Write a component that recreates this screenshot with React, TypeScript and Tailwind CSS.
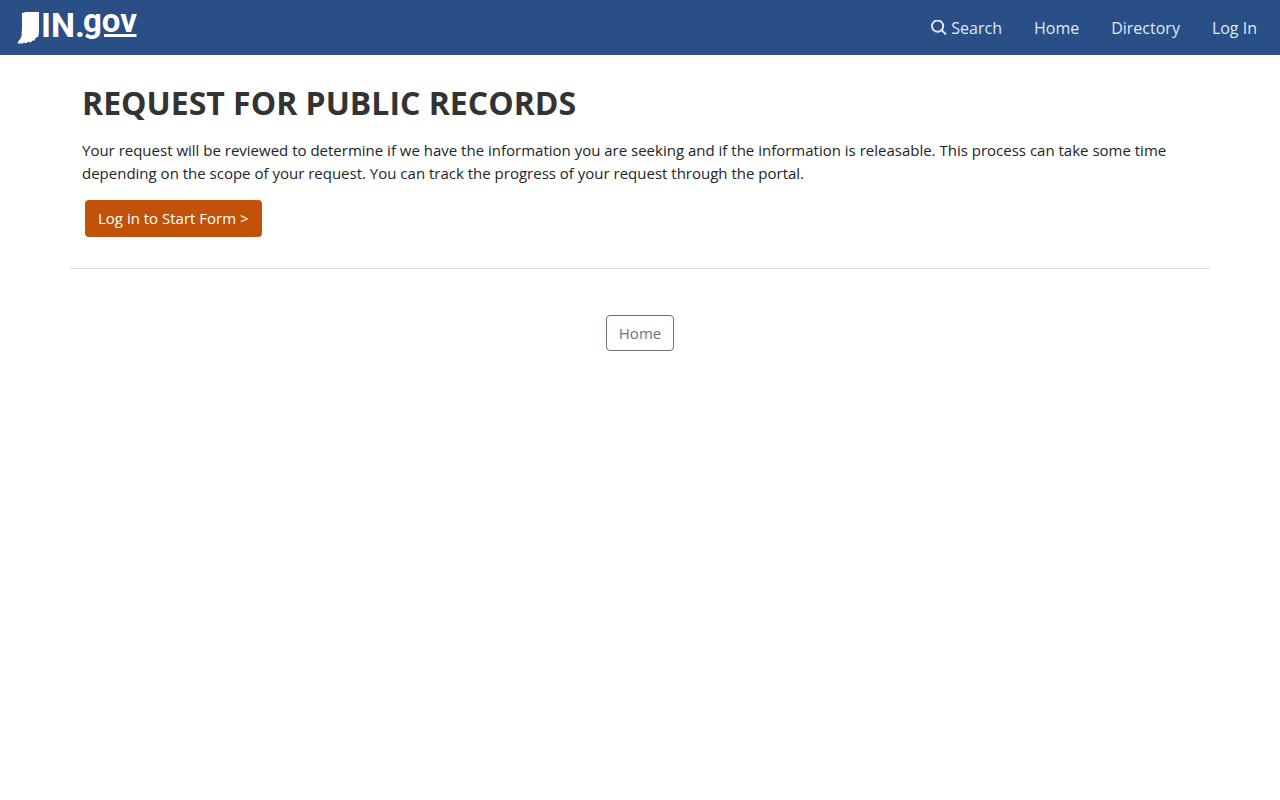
interface NavItem {
  href: string;
  label: string;
}

const navItems: NavItem[] = [
  { href: "#home", label: "Home" },
  { href: "#directory", label: "Directory" },
  { href: "#login", label: "Log In" },
];

function SearchIcon() {
  return (
    <svg className="size-4" viewBox="0 0 16 16" fill="none" stroke="currentColor" strokeWidth="1.9" aria-hidden="true">
      <circle cx="6.6" cy="6.1" r="5.6" />
      <path d="M10.6 10.1l4.4 4.4" />
    </svg>
  );
}

function Logo() {
  return (
    <a href="#home" aria-label="IN.gov" className="block text-white">
      <svg className="h-[55px] w-[140px]" viewBox="0 0 140 55" fill="currentColor" aria-hidden="true">
        <path d="M22 12.6L23.5 13L25.5 12H39V33.5L38.3 35L38.6 36.3L36.8 37.3L35.2 38.8L34.3 40.8L32.4 40.6L30.8 42.5L28.5 41.8L26 43.3L24 42.4L22 43.8L20 43.3L17.8 44L18.4 41.2L20.6 38.5L21.8 35.2L21.6 32L22 30Z" />
        <text x="41" y="37" fontFamily="Roboto, sans-serif" fontWeight="700" fontSize="34">
          I
        </text>
        <text x="51" y="37" fontFamily="Roboto, sans-serif" fontWeight="700" fontSize="34">
          N.
        </text>
        <text x="83" y="32" fontFamily="Roboto, sans-serif" fontWeight="700" fontSize="33">
          gov
        </text>
        <rect x="104" y="34" width="32.5" height="3" />
      </svg>
    </a>
  );
}

export default function App() {
  return (
    <div className="min-h-screen bg-white font-['Open_Sans',sans-serif] text-[15px] leading-[23px] text-[#212529]">
      <header className="flex h-[55px] items-center justify-between bg-[#2a4e86] pr-[23px]">
        <Logo />
        <nav className="flex items-center gap-8 text-base text-[#dfe9f7]">
          <a href="#search" className="flex items-center gap-1">
            <SearchIcon />
            Search
          </a>
          {navItems.map((item) => (
            <a key={item.href} href={item.href}>
              {item.label}
            </a>
          ))}
        </nav>
      </header>

      <main className="mx-auto max-w-[1140px]">
        <section className="border-b border-[#dcdddf] px-3 pt-7 pb-[31px]">
          <h1 className="mb-4 text-[32px] leading-10 font-bold text-[#333333]">REQUEST FOR PUBLIC RECORDS</h1>
          <p className="mb-[15px]">
            Your request will be reviewed to determine if we have the information you are seeking and if the information
            is releasable. This process can take some time depending on the scope of your request. You can track the
            progress of your request through the portal.
          </p>
          <button type="button" className="ml-[3px] block rounded bg-[#c2510a] px-[13px] py-[7px] text-white">
            Log in to Start Form &gt;
          </button>
        </section>
        <div className="flex justify-center pt-[46px]">
          <a href="#home" className="rounded border border-[#6b7184] px-3 py-[6px] leading-[22px] text-[#6c757d]">
            Home
          </a>
        </div>
      </main>
    </div>
  );
}
